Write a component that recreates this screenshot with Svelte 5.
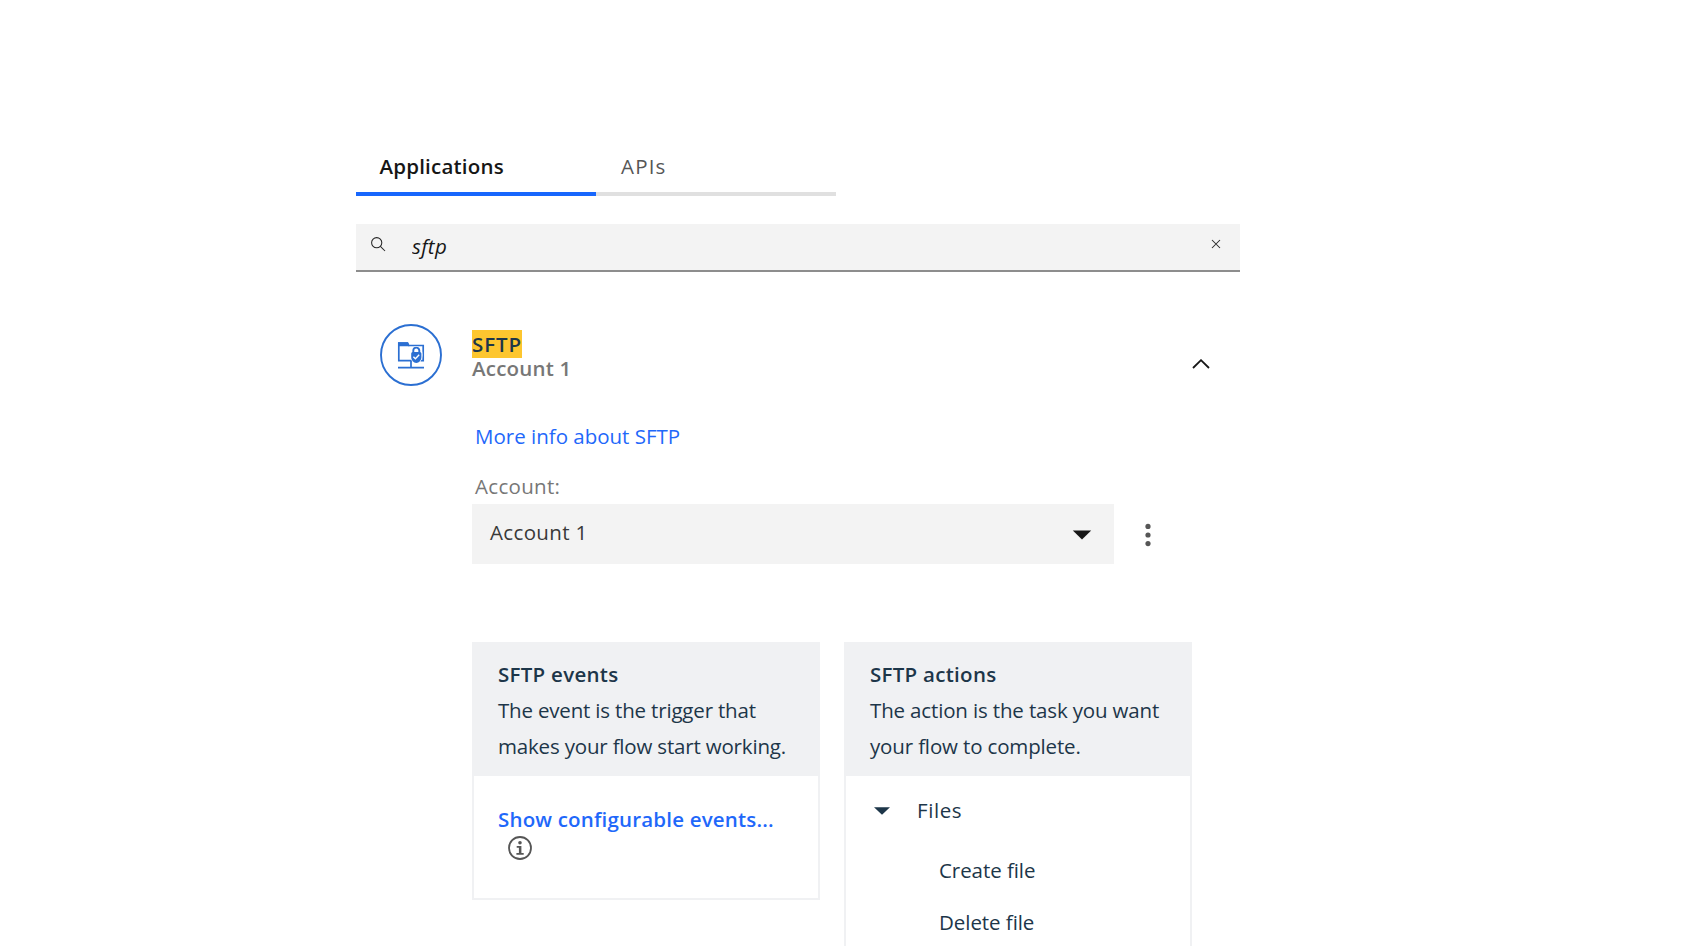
<script>
  let query = $state('sftp');
  const actions = ['Create file', 'Delete file'];
</script>

<main>
  <nav class="tabs">
    <div class="tab active">Applications</div>
    <div class="tab">APIs</div>
  </nav>

  <div class="search">
    <svg class="magnifier" width="16" height="16" viewBox="0 0 16 16"><circle cx="6.7" cy="6.7" r="5.1" /><path d="M10.4 10.4 15 15" /></svg>
    <input bind:value={query} aria-label="Search" />
    <svg class="close" width="10" height="10" viewBox="0 0 10 10"><path d="M1 1 9 9M9 1 1 9" /></svg>
  </div>

  <section class="connector">
    <header>
      <svg class="logo" width="62" height="62" viewBox="0 0 62 62">
        <circle cx="31" cy="31" r="30" fill="#fff" stroke="#2b6fd2" stroke-width="1.9" />
        <path d="M18.8 19h8.8l1.2 2.5h14.4v15.2H18.8zM31 37v6M18 43.6h26" fill="none" stroke="#2b6fd2" stroke-width="1.7" />
        <path d="M18 18.2h9.8l1.6 4H18z" fill="#2b6fd2" />
        <ellipse cx="36.3" cy="31" rx="6.2" ry="8.8" fill="#fff" />
        <path d="M33.3 29v-2.4a3 3 0 0 1 6 0V29" fill="none" stroke="#2b6fd2" stroke-width="1.9" />
        <path d="M31.2 29.5q0-1.6 1.6-1.6h7q1.6 0 1.6 1.6v3.7a5.1 5.8 0 0 1-10.2 0z" fill="#2b6fd2" />
        <path d="m33.4 32.7 2 2 3.8-3.9" fill="none" stroke="#fff" stroke-width="1.4" />
      </svg>
      <div class="title">
        <mark>SFTP</mark>
        <span class="sub">Account 1</span>
      </div>
      <svg class="chevron" width="18" height="10" viewBox="0 0 18 10"><path d="M1 9 9 1.2 17 9" /></svg>
    </header>

    <div class="details">
      <a class="more" href="#more">More info about SFTP</a>
      <div class="label">Account:</div>
      <div class="account">
        <div class="select">
          <span>Account 1</span>
          <svg width="20" height="10" viewBox="0 0 20 10"><path d="M.8.4h18.4L10 9.6z" fill="#161616" /></svg>
        </div>
        <svg class="menu" width="6" height="24" viewBox="0 0 6 24"><circle cx="3" cy="3.4" r="2.6" /><circle cx="3" cy="12" r="2.6" /><circle cx="3" cy="20.6" r="2.6" /></svg>
      </div>

      <div class="cards">
        <article class="card events">
          <div class="head">
            <h3>SFTP events</h3>
            <p>The event is the trigger that<br />makes your flow start working.</p>
          </div>
          <a class="show" href="#events">Show configurable events...</a>
          <svg class="info" width="24" height="24" viewBox="0 0 24 24">
            <circle cx="12" cy="12" r="11" fill="none" stroke="#565656" stroke-width="1.8" />
            <circle cx="12" cy="6.8" r="1.8" fill="#565656" />
            <path d="M8.7 10h4.7v6.9h2.3v1.8H8.4v-1.8h2.5v-5.1H8.7z" fill="#565656" />
          </svg>
        </article>

        <article class="card actions">
          <div class="head">
            <h3>SFTP actions</h3>
            <p class="task">The action is the task you want<br />your flow to complete.</p>
          </div>
          <div class="group">
            <svg width="16" height="8" viewBox="0 0 16 8"><path d="M0 .2h16L8 7.8z" fill="#1d3649" /></svg>
            <span>Files</span>
          </div>
          {#each actions as action}
            <div class="item">{action}</div>
          {/each}
        </article>
      </div>
    </div>
  </section>
</main>

<style>
  :global(body) { margin: 0; background: #fff; }
  main {
    box-sizing: border-box;
    height: 946px;
    overflow: hidden;
    padding: 140px 0 0 356px;
    font: 20.5px/28px "Open Sans", "Liberation Sans", sans-serif;
    color: #1d3649;
    letter-spacing: -.18px;
  }
  a { text-decoration: none; color: #1f68fa; }
  h3, p { margin: 0; }
  .tabs { display: flex; }
  .tab {
    box-sizing: border-box;
    width: 240px;
    height: 56px;
    padding: 2px 0 0 25px;
    border-bottom: 4px solid #e0e0e0;
    line-height: 48px;
    color: #565656;
    letter-spacing: 1.2px;
  }
  .tab.active {
    padding-left: 23.5px;
    border-color: #1767fd;
    color: #161616;
    font-weight: 600;
    letter-spacing: .2px;
  }
  .search {
    display: flex;
    box-sizing: border-box;
    width: 884px;
    height: 48px;
    margin-top: 28px;
    padding: 0 20px 0 14px;
    background: #f3f3f3;
    border-bottom: 2px solid #8d8d8d;
  }
  .search svg { fill: none; stroke: #262626; stroke-width: 1.05; flex: none; }
  .magnifier { margin: 12px 26px 0 0; }
  .close { margin-top: 15px; margin-right: -1px; }
  input {
    flex: 1;
    box-sizing: border-box;
    height: 46px;
    padding: 0 0 2px;
    border: 0;
    outline: 0;
    background: transparent;
    font: italic 20.5px "Open Sans", sans-serif;
    letter-spacing: .3px;
    color: #161616;
  }
  .connector { width: 884px; }
  header { display: flex; padding: 52px 30px 0 24px; }
  .logo { flex: none; }
  .title {
    display: flex;
    flex-direction: column;
    align-items: flex-start;
    margin: 6px 0 0 30px;
    font-weight: 600;
  }
  mark {
    box-sizing: border-box;
    width: 50px;
    height: 28px;
    line-height: 28px;
    background: #fdc62f;
    color: #1d3649;
    letter-spacing: .9px;
  }
  .sub { line-height: 20px; color: #777; letter-spacing: .2px; }
  .chevron { margin: 35px 0 0 auto; fill: none; stroke: #161616; stroke-width: 1.8; }
  .details { padding-left: 116px; }
  .more { display: block; margin: 36px 0 0 3px; letter-spacing: 0; }
  .label { margin: 22px 0 0 3px; color: #777; letter-spacing: .3px; }
  .account { display: flex; align-items: center; margin-top: 4px; }
  .select {
    display: flex;
    align-items: center;
    justify-content: space-between;
    box-sizing: border-box;
    width: 642px;
    height: 60px;
    padding: 0 22px 4px 18px;
    background: #f3f3f3;
    color: #393939;
    letter-spacing: .35px;
  }
  .select svg { margin-top: 5px; }
  .menu { margin: 2px 0 0 31px; fill: #565656; }
  .cards { display: flex; align-items: flex-start; gap: 24px; margin-top: 78px; }
  .card { box-sizing: border-box; width: 348px; border: solid #f0f1f3; border-width: 0 2px 2px; }
  .events { height: 258px; }
  .head { height: 134px; margin: 0 -2px; padding: 14px 0 0 26px; box-sizing: border-box; background: #f0f1f3; line-height: 36px; white-space: nowrap; }
  h3 { font-size: inherit; font-weight: 600; letter-spacing: .28px; }
  .task { letter-spacing: -.15px; }
  .show { display: block; margin: 29px 0 0 24px; font-weight: 600; letter-spacing: .18px; white-space: nowrap; }
  .info { display: block; margin: 3px 0 0 34px; }
  .group { display: flex; align-items: center; height: 70px; padding-left: 28px; letter-spacing: .6px; }
  .group span { margin: 0 0 2px 27px; }
  .item { height: 52px; padding-left: 93px; line-height: 48px; letter-spacing: -.06px; }
</style>
